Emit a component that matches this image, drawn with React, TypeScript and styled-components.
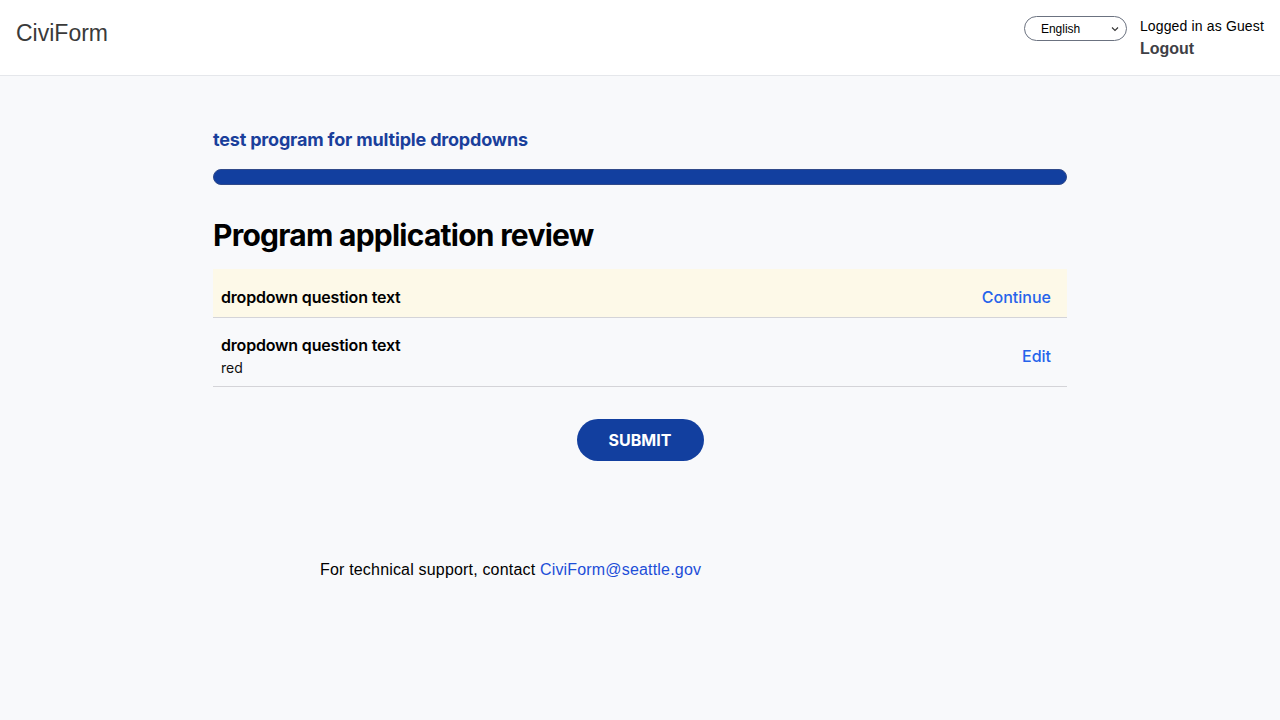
import React from "react";
import styled, { createGlobalStyle } from "styled-components";

const Global = createGlobalStyle`
  html, body { margin: 0; padding: 0; }
  body {
    background: #f8f9fb;
    font-family: Inter, "Liberation Sans", Arial, sans-serif;
    color: #000;
  }
`;

const Header = styled.header`
  height: 76px;
  box-sizing: border-box;
  background: #fff;
  border-bottom: 1px solid #e5e7eb;
  display: flex;
  align-items: flex-start;
  justify-content: space-between;
  padding: 0 16px;
`;

const Logo = styled.div`
  font-family: "Liberation Sans", Arial, sans-serif;
  font-size: 23px;
  color: #3a3a3a;
  margin-top: 20px;
`;

const Right = styled.div`
  display: flex;
  align-items: flex-start;
  gap: 13px;
  margin-top: 16px;
`;

const LangSelect = styled.div`
  width: 103px;
  height: 25px;
  box-sizing: border-box;
  border: 1px solid #6b7280;
  border-radius: 13px;
  display: flex;
  align-items: center;
  justify-content: space-between;
  padding: 0 6px 0 16px;
  font-family: "Liberation Sans", Arial, sans-serif;
  font-size: 12px;
  color: #000;
  background: #fff;
`;

const UserBox = styled.div`
  display: flex;
  flex-direction: column;
  font-family: "Liberation Sans", Arial, sans-serif;
`;

const UserLine = styled.div`
  font-size: 14px;
  line-height: 20px;
  letter-spacing: 0.15px;
`;

const LogoutLink = styled.div`
  font-size: 16px;
  font-weight: 700;
  color: #3f3f46;
  line-height: 24px;
  margin-top: 1px;
`;

const Main = styled.main`
  width: 854px;
  margin: 0 auto;
  padding-top: 52px;
`;

const ProgramTitle = styled.h2`
  margin: 0;
  font-size: 18px;
  font-weight: 700;
  color: #1a3f9b;
  line-height: 24px;
  letter-spacing: -0.18px;
`;

const ProgressTrack = styled.div`
  margin-top: 17px;
  height: 16px;
  box-sizing: border-box;
  border: 1px solid #304a8a;
  border-radius: 8px;
  background: #123f9f;
`;

const PageHeading = styled.h1`
  margin: 30px 0 0;
  font-size: 30px;
  font-weight: 700;
  line-height: 40px;
  letter-spacing: -0.75px;
`;

const List = styled.div`
  margin-top: 14px;
`;

const Row = styled.div<{ $highlight?: boolean; $tall?: boolean }>`
  display: flex;
  align-items: center;
  justify-content: space-between;
  box-sizing: border-box;
  height: ${(p) => (p.$tall ? 69 : 49)}px;
  padding: 8px 16px 0 8px;
  background: ${(p) => (p.$highlight ? "#fdf9e8" : "transparent")};
  border-bottom: 1px solid #d4d4d8;
`;

const QText = styled.div`
  display: flex;
  flex-direction: column;
`;

const QTitle = styled.div`
  font-size: 16px;
  font-weight: 600;
  line-height: 22px;
  letter-spacing: -0.18px;
`;

const QAnswer = styled.div`
  font-size: 14px;
  line-height: 20px;
  margin-top: 2px;
  color: #111;
`;

const ActionLink = styled.a`
  font-size: 16px;
  font-weight: 500;
  color: #2563eb;
  text-decoration: none;
`;

const SubmitWrap = styled.div`
  display: flex;
  justify-content: center;
  margin-top: 32px;
`;

const SubmitButton = styled.button`
  width: 127px;
  height: 42px;
  border: none;
  border-radius: 21px;
  background: #123f9f;
  color: #fff;
  font-family: Inter, "Liberation Sans", Arial, sans-serif;
  font-size: 16px;
  font-weight: 700;
`;

const Footer = styled.footer`
  padding-left: 320px;
  margin-top: 97px;
  font-family: "Liberation Sans", Arial, sans-serif;
  font-size: 16px;
  line-height: 24px;
  letter-spacing: 0.18px;
`;

const FooterLink = styled.a`
  color: #1d4ed8;
  text-decoration: none;
`;

export default function App() {
  return (
    <>
      <Global />
      <Header>
        <Logo>CiviForm</Logo>
        <Right>
          <LangSelect>
            <span>English</span>
            <svg width="10" height="10" viewBox="0 0 10 10">
              <path d="M2 3.5 L5 6.5 L8 3.5" fill="none" stroke="#333" strokeWidth="1.1" />
            </svg>
          </LangSelect>
          <UserBox>
            <UserLine>Logged in as Guest</UserLine>
            <LogoutLink>Logout</LogoutLink>
          </UserBox>
        </Right>
      </Header>
      <Main>
        <ProgramTitle>test program for multiple dropdowns</ProgramTitle>
        <ProgressTrack />
        <PageHeading>Program application review</PageHeading>
        <List>
          <Row $highlight>
            <QText>
              <QTitle>dropdown question text</QTitle>
            </QText>
            <ActionLink href="#">Continue</ActionLink>
          </Row>
          <Row $tall>
            <QText>
              <QTitle>dropdown question text</QTitle>
              <QAnswer>red</QAnswer>
            </QText>
            <ActionLink href="#">Edit</ActionLink>
          </Row>
        </List>
        <SubmitWrap>
          <SubmitButton>SUBMIT</SubmitButton>
        </SubmitWrap>
      </Main>
      <Footer>
        For technical support, contact <FooterLink href="#">CiviForm@seattle.gov</FooterLink>
      </Footer>
    </>
  );
}
